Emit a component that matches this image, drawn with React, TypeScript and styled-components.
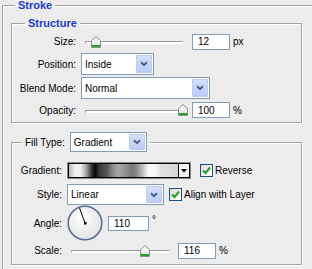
import styled, { createGlobalStyle } from "styled-components";

const GlobalStyle = createGlobalStyle`
  html, body {
    margin: 0;
    padding: 0;
    background: #ececec;
  }
  body {
    font-family: "Liberation Sans", Arial, sans-serif;
    font-size: 10px;
    color: #000;
    overflow: hidden;
  }
`;

const Page = styled.div`
  width: 312px;
  height: 269px;
  overflow: hidden;
`;

const Group = styled.div<{ $w: number; $mt: number; $ml: number; $pb: number }>`
  box-sizing: border-box;
  width: ${(p) => p.$w}px;
  margin: ${(p) => p.$mt}px 0 0 ${(p) => p.$ml}px;
  padding-bottom: ${(p) => p.$pb}px;
  border: 1px solid #a2a2a2;
  box-shadow: 1px 1px 0 #fff, inset 1px 1px 0 #fff;
`;

const Legend = styled.div<{ $ml: number; $h: number }>`
  display: flex;
  align-items: center;
  gap: 5px;
  width: fit-content;
  height: ${(p) => p.$h}px;
  margin: ${(p) => -Math.ceil(p.$h / 2 + 0.5)}px 0 0 ${(p) => p.$ml}px;
  padding: 0 3px;
  background: #ececec;
`;

const Title = styled.span`
  font-size: 11px;
  font-weight: bold;
  color: #1b3ccc;
  line-height: 13px;
`;

const Row = styled.div<{ $h: number; $mt: number }>`
  display: flex;
  align-items: center;
  gap: 5px;
  height: ${(p) => p.$h}px;
  margin-top: ${(p) => p.$mt}px;
`;

const Label = styled.span<{ $w?: number }>`
  width: ${(p) => (p.$w ? `${p.$w}px` : "auto")};
  text-align: right;
  white-space: nowrap;
`;

const SelectBox = styled.div<{ $w: number; $h: number }>`
  box-sizing: border-box;
  display: flex;
  width: ${(p) => p.$w}px;
  height: ${(p) => p.$h}px;
  padding: 1px;
  border: 1px solid #7f9db9;
  background: #fff;
`;

const SelectText = styled.span`
  flex: 1;
  display: flex;
  align-items: center;
  padding-left: 2px;
`;

const SelectBtn = styled.span`
  box-sizing: border-box;
  width: 16px;
  display: flex;
  align-items: center;
  justify-content: center;
  border: 1px solid #bccbf2;
  border-radius: 1px;
  background: linear-gradient(#d6e0fd, #b8cbf7);
`;

const NumInput = styled.input<{ $w: number; $h: number }>`
  box-sizing: border-box;
  width: ${(p) => p.$w}px;
  height: ${(p) => p.$h}px;
  margin: 0;
  padding: 0 0 0 5px;
  border: 1px solid #7f9db9;
  background: #fff;
  font: inherit;
  color: #000;
  outline: none;
`;

const Unit = styled.span<{ $raise?: boolean }>`
  margin-left: -2px;
  position: relative;
  top: ${(p) => (p.$raise ? -4 : 0)}px;
`;

const SliderWrap = styled.div`
  position: relative;
  width: 106px;
  height: 100%;
  display: flex;
  align-items: center;
  padding: 0 4px;
  box-sizing: border-box;
`;

const Track = styled.div`
  flex: 1;
  height: 2px;
  margin-top: 2px;
  border-top: 1px solid #9a9a9a;
  border-left: 1px solid #9a9a9a;
  border-radius: 2px 0 0 2px;
  background: #fff;
`;

const Thumb = styled.svg`
  position: absolute;
  top: 50%;
  margin: -6px 0 0 -5px;
`;

const GradBox = styled.div`
  box-sizing: border-box;
  display: flex;
  width: 124px;
  height: 17px;
  border: 1px solid #8a8a8a;
  box-shadow: inset 0 0 0 1px #000;
  padding: 1px;
`;

const GradFill = styled.div`
  flex: 1;
  background: linear-gradient(
    to right,
    #bcbcbc 0%,
    #f2f2f2 6%,
    #ececec 11%,
    #a0a0a0 16%,
    #2e2e2e 21%,
    #080808 24%,
    #3a3a3a 28%,
    #575757 35%,
    #8a8a8a 40%,
    #a8a8a8 45%,
    #959595 51%,
    #767676 58%,
    #8c8c8c 62%,
    #bababa 67%,
    #fafafa 73%,
    #f6f6f6 79%,
    #e2e2e2 84%,
    #d6d6d6 100%
  );
`;

const GradArrow = styled.span`
  width: 10px;
  display: flex;
  align-items: center;
  justify-content: center;
  border-left: 1px solid #000;
  background: #f4f4f4;
`;

const Check = styled.span<{ $ml?: number }>`
  display: flex;
  align-items: center;
  gap: 2px;
  margin-left: ${(p) => p.$ml ?? 0}px;
  white-space: nowrap;
`;

const CheckBox = styled.span`
  box-sizing: border-box;
  width: 13px;
  height: 13px;
  display: flex;
  align-items: center;
  justify-content: center;
  border: 1px solid #1c5180;
  background: linear-gradient(135deg, #dcdcd6, #fff);
`;

const Chevron = () => (
  <svg width="8" height="6" viewBox="0 0 8 6">
    <path d="M1 1.2 L4 4.2 L7 1.2" fill="none" stroke="#4d6185" strokeWidth="2" />
  </svg>
);

const Tick = () => (
  <svg width="9" height="9" viewBox="0 0 9 9">
    <path d="M1 4.5 L3.5 7 L8 1.5" fill="none" stroke="#21a121" strokeWidth="2" />
  </svg>
);

function Select({ w, h, text }: { w: number; h: number; text: string }) {
  return (
    <SelectBox $w={w} $h={h}>
      <SelectText>{text}</SelectText>
      <SelectBtn>
        <Chevron />
      </SelectBtn>
    </SelectBox>
  );
}

function Slider({ pos }: { pos: number }) {
  return (
    <SliderWrap>
      <Track />
      <Thumb
        width="10"
        height="12"
        viewBox="0 0 10 12"
        style={{ left: `${4 + pos * 98}px` }}
      >
        <defs>
          <linearGradient id="thumbFill" x1="0" y1="0" x2="0" y2="1">
            <stop offset="0" stopColor="#ffffff" />
            <stop offset="1" stopColor="#dcdcdc" />
          </linearGradient>
        </defs>
        <path d="M0.5 4.5 L5 0.5 L9.5 4.5 L9.5 11.5 L0.5 11.5 Z" fill="url(#thumbFill)" stroke="#8c8c8c" />
        <rect x="1" y="9" width="8" height="2" fill="#1fa12a" />
      </Thumb>
    </SliderWrap>
  );
}

function Checkbox({ label, ml }: { label: string; ml?: number }) {
  return (
    <Check $ml={ml}>
      <CheckBox>
        <Tick />
      </CheckBox>
      {label}
    </Check>
  );
}

function Dial({ angle }: { angle: number }) {
  const r = (angle * Math.PI) / 180;
  const x = 18 + Math.cos(r) * 16;
  const y = 18 - Math.sin(r) * 16;
  return (
    <svg width="36" height="36" viewBox="0 0 36 36">
      <defs>
        <radialGradient id="dialFill" cx="0.4" cy="0.35" r="0.7">
          <stop offset="0" stopColor="#ffffff" />
          <stop offset="1" stopColor="#e2e2e2" />
        </radialGradient>
      </defs>
      <circle cx="18" cy="18" r="16.8" fill="url(#dialFill)" stroke="#5b6d96" strokeWidth="1.6" />
      <line x1="18" y1="18" x2={x} y2={y} stroke="#000" strokeWidth="1" />
      <rect x="17" y="17" width="2.5" height="2.5" fill="#000" />
    </svg>
  );
}

export default function App() {
  return (
    <Page>
      <GlobalStyle />
      <Group $w={330} $mt={5} $ml={2} $pb={20}>
        <Legend $ml={12} $h={13}>
          <Title>Stroke</Title>
        </Legend>

        <Group $w={291} $mt={11} $ml={8} $pb={3}>
          <Legend $ml={13} $h={13}>
            <Title>Structure</Title>
          </Legend>
          <Row $h={17} $mt={3}>
            <Label $w={64}>Size:</Label>
            <Slider pos={0.11} />
            <NumInput $w={38} $h={16} value="12" readOnly />
            <Unit>px</Unit>
          </Row>
          <Row $h={22} $mt={3}>
            <Label $w={64}>Position:</Label>
            <Select w={73} h={22} text="Inside" />
          </Row>
          <Row $h={22} $mt={2}>
            <Label $w={64}>Blend Mode:</Label>
            <Select w={129} h={22} text="Normal" />
          </Row>
          <Row $h={18} $mt={2}>
            <Label $w={64}>Opacity:</Label>
            <Slider pos={1} />
            <NumInput $w={38} $h={16} value="100" readOnly />
            <Unit>%</Unit>
          </Row>
        </Group>

        <Group $w={291} $mt={19} $ml={8} $pb={5}>
          <Legend $ml={10} $h={20}>
            <Label>Fill Type:</Label>
            <Select w={77} h={20} text="Gradient" />
          </Legend>
          <Row $h={17} $mt={10}>
            <Label $w={50}>Gradient:</Label>
            <GradBox>
              <GradFill />
              <GradArrow>
                <svg width="6" height="4" viewBox="0 0 6 4">
                  <path d="M0 0 H6 L3 3.5 Z" fill="#000" />
                </svg>
              </GradArrow>
            </GradBox>
            <Checkbox label="Reverse" ml={4} />
          </Row>
          <Row $h={21} $mt={5}>
            <Label $w={50}>Style:</Label>
            <Select w={97} h={21} text="Linear" />
            <Checkbox label="Align with Layer" />
          </Row>
          <Row $h={36} $mt={0}>
            <Label $w={50}>Angle:</Label>
            <Dial angle={110} />
            <NumInput $w={41} $h={15} value="110" readOnly />
            <Unit $raise>°</Unit>
          </Row>
          <Row $h={17} $mt={1}>
            <Label $w={50}>Scale:</Label>
            <Slider pos={0.76} />
            <NumInput $w={38} $h={16} value="116" readOnly />
            <Unit>%</Unit>
          </Row>
        </Group>
      </Group>
    </Page>
  );
}
